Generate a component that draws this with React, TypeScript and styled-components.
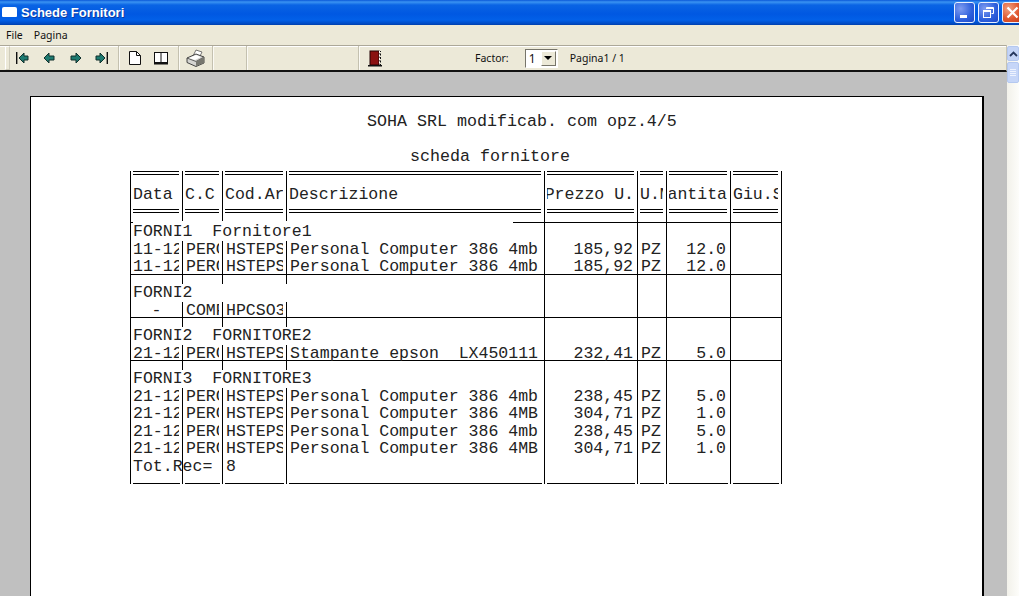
import React from 'react';
import styled, { createGlobalStyle } from 'styled-components';

const GlobalStyle = createGlobalStyle`
  html, body {
    margin: 0;
    height: 100%;
    overflow: hidden;
    background: #fff;
  }
`;

const Window = styled.div`
  display: flex;
  flex-direction: column;
  width: 1019px;
  height: 596px;
  overflow: hidden;
  font-family: 'Noto Sans', 'Liberation Sans', sans-serif;
  font-size: 11px;
  color: #111;
`;

const TitleBar = styled.header`
  display: flex;
  align-items: center;
  flex: 0 0 25px;
  padding: 0 0 1px 2px;
  box-sizing: border-box;
  background: linear-gradient(180deg, #0a58d8 0, #3a93f2 2px, #0a64e4 5px, #0058e2 14px, #0260e8 20px, #0048c0 24px, #003ea8 25px);
`;

const AppIcon = styled.span`
  width: 15px;
  height: 10px;
  margin: 0 4px 0 0;
  background: #fff;
  border-radius: 2px 2px 1px 1px;
`;

const TitleText = styled.span`
  flex: 1;
  font-family: 'Liberation Sans', Arial, sans-serif;
  font-size: 13px;
  font-weight: bold;
  color: #fff;
  text-shadow: 1px 1px 0 #0a3aa0;
`;

const CaptionButton = styled.span<{ $close?: boolean }>`
  display: flex;
  align-items: center;
  justify-content: center;
  width: 21px;
  height: 21px;
  margin-left: 3px;
  box-sizing: border-box;
  border: 1px solid #e8f0ff;
  border-radius: 3px;
  background: ${(p) =>
    p.$close
      ? 'radial-gradient(circle at 30% 30%, #f0a080, #e0562e 55%, #c43a16)'
      : 'radial-gradient(circle at 30% 30%, #7f9cf0, #2d5fdc 60%, #1e48c8)'};
  &:last-child {
    margin-right: -4px;
  }
`;

const MenuBar = styled.nav`
  display: flex;
  align-items: center;
  gap: 11px;
  flex: 0 0 20px;
  padding: 0 0 0 6px;
  background: #ece9d8;
`;

const MenuItem = styled.span`
  font-size: 10.5px;
`;

const Workspace = styled.div`
  display: flex;
  flex: 1;
  min-height: 0;
`;

const MainColumn = styled.div`
  display: flex;
  flex-direction: column;
  flex: 0 0 1007px;
  min-width: 0;
`;

const ToolBar = styled.div`
  display: flex;
  align-items: stretch;
  flex: 0 0 27px;
  box-sizing: border-box;
  background: #ece9d8;
  border-top: 1px solid #aca899;
  border-bottom: 2px solid #111;
  box-shadow: inset 0 1px 0 #fff;
  border-right: 1px solid #c8c5b4;
`;

const ToolGroup = styled.div<{ $w: number; $pad?: number }>`
  display: flex;
  align-items: center;
  flex: 0 0 ${(p) => p.$w}px;
  padding-left: ${(p) => p.$pad ?? 0}px;
  box-sizing: border-box;
  border-right: 1px solid #c4c1b0;
  box-shadow: 1px 0 0 #fbfaf4;
`;

const StatusGroup = styled.div`
  display: flex;
  align-items: center;
  flex: 1;
  padding-left: 9px;
`;

const Gripper = styled.span`
  width: 3px;
  height: 22px;
  margin-left: 5px;
  border: 1px solid #cfccbb;
  border-left-color: #fff;
  border-top-color: #fff;
`;

const ToolButton = styled.span<{ $w: number }>`
  display: flex;
  align-items: center;
  justify-content: center;
  flex: 0 0 ${(p) => p.$w}px;
`;

const ToolLabel = styled.span<{ $left: number }>`
  margin-left: ${(p) => p.$left}px;
  font-size: 10.5px;
  white-space: nowrap;
`;

const Combo = styled.span`
  display: flex;
  align-items: center;
  justify-content: space-between;
  width: 33px;
  height: 19px;
  margin-left: 16px;
  padding: 1px;
  box-sizing: border-box;
  background: #fff;
  border: 1px solid;
  border-color: #77756a #fff #fff #77756a;
  font-size: 12px;
`;

const ComboValue = styled.span`
  padding-left: 2px;
`;

const ComboArrow = styled.span`
  display: flex;
  align-items: center;
  justify-content: center;
  width: 15px;
  height: 15px;
  background: #ece9d8;
  border: 1px solid;
  box-sizing: border-box;
  border-color: #fff #77756a #77756a #fff;
  &::after {
    content: '';
    border: 4px solid transparent;
    border-top: 4px solid #000;
    border-bottom: 0;
  }
`;

const Canvas = styled.main`
  flex: 1;
  min-height: 0;
  overflow: hidden;
  padding: 24px 0 0 30px;
  background: #c0c0c0;
`;

const Sheet = styled.section`
  width: 952px;
  height: 560px;
  box-sizing: border-box;
  padding: 16px 0 0 0;
  background: #fff;
  border-top: 1px solid #000;
  border-left: 1px solid #000;
  box-shadow: 2px 0 0 #000;
  color: #222;
`;

const ReportLine = styled.div<{ $indent: number; $gap?: number }>`
  margin: ${(p) => p.$gap ?? 0}px 0 0 ${(p) => p.$indent}px;
  font-family: 'Liberation Mono', 'Courier New', monospace;
  font-size: 16.67px;
  line-height: 18px;
  white-space: pre;
`;

const columns = [52, 40, 64, 258, 93, 29, 64, 51];

const Table = styled.div`
  width: 652px;
  margin: 5px 0 0 99px;
  font-family: 'Liberation Mono', 'Courier New', monospace;
  font-size: 16.55px;
  line-height: 17.5px;
`;

const Row = styled.div<{ $h?: number }>`
  display: grid;
  grid-template-columns: ${columns.map((c) => `${c}px`).join(' ')};
  height: ${(p) => (p.$h ? `${p.$h}px` : '17.5px')};
  border-right: 1px solid #000;
`;

const Group = styled.div<{ $h?: number }>`
  height: ${(p) => (p.$h ? `${p.$h}px` : 'auto')};
  border-top: 1px solid #000;
  box-sizing: border-box;
`;

// the transparent right border keeps clipped text short of the next rule, as in the report
const Cell = styled.div<{ $align?: string; $span?: number; $open?: boolean }>`
  grid-column: span ${(p) => p.$span ?? 1};
  min-width: 0;
  padding: 0 ${(p) => (p.$align === 'right' ? '1px' : '0')} 0 ${(p) => (p.$align === 'right' ? '0' : '3px')};
  border-left: 1px solid #000;
  border-right: 3px solid transparent;
  text-align: ${(p) => p.$align ?? 'left'};
  white-space: pre;
  overflow: ${(p) => (p.$open ? 'visible' : 'hidden')};
  &:first-child {
    padding-left: ${(p) => (p.$align === 'center' ? '3px' : '2px')};
  }
`;

const GroupTitle = styled.div<{ $lift?: boolean }>`
  position: relative;
  width: 380px;
  height: 18px;
  margin-top: ${(p) => (p.$lift ? '-2px' : '0')};
  padding-top: ${(p) => (p.$lift ? '2px' : '0')};
  background: #fff;
`;

const HeadCell = styled.div`
  min-width: 0;
  padding: 0 3px 9px 2px;
  border-left: 1px solid #000;
`;

const HeadLabel = styled.div<{ $align?: string }>`
  display: flex;
  align-items: center;
  justify-content: ${(p) => (p.$align === 'right' ? 'flex-end' : 'flex-start')};
  box-sizing: border-box;
  height: 100%;
  padding-top: 5px;
  border-top: 4px double #000;
  border-bottom: 4px double #000;
  white-space: pre;
  overflow: hidden;
`;

const FootCell = styled.div`
  border-left: 1px solid #000;
  padding: 0 2px 0 2px;
`;

const FootRule = styled.div`
  height: 100%;
  box-sizing: border-box;
  border-bottom: 1px solid #000;
`;

const ScrollBar = styled.aside`
  display: flex;
  flex-direction: column;
  gap: 1px;
  flex: 1;
  padding-top: 1px;
  background: linear-gradient(90deg, #f2f1ea, #fdfdfa);
`;

const ScrollArrow = styled.span`
  display: flex;
  align-items: center;
  justify-content: center;
  height: 13px;
  border: 1px solid #b4c8f0;
  border-radius: 2px;
  background: #c4d4f6;
`;

const ScrollThumb = styled.span`
  display: flex;
  flex-direction: column;
  justify-content: center;
  gap: 1px;
  height: 19px;
  padding: 0 2px;
  border: 1px solid #b4c8f0;
  border-radius: 2px;
  background: #c6d6f8;
`;

const ThumbLine = styled.span`
  height: 1px;
  background: #eef3fe;
`;

// toolbar drawings

function NavIcon({ dir, stop }: { dir: 'left' | 'right'; stop?: boolean }) {
  return (
    <svg width="16" height="14" viewBox="0 0 16 14">
      <g transform={dir === 'right' ? 'translate(16 0) scale(-1 1)' : undefined}>
        {stop && <rect x="2" y="1" width="1.4" height="12" fill="#111" />}
        <path
          d={stop ? 'M5 7l5-5v3h4v4h-4v3z' : 'M3 7l5-5v3h5v4H8v3z'}
          fill="#1d7a70"
          stroke="#10302c"
          strokeWidth="1"
        />
      </g>
    </svg>
  );
}

function PageIcon() {
  return (
    <svg width="14" height="16" viewBox="0 0 14 16">
      <path d="M1.5 1.5h7l4 4v9h-11z" fill="#fff" stroke="#111" />
      <path d="M8.5 1.5v4h4" fill="none" stroke="#111" />
    </svg>
  );
}

function BookIcon() {
  return (
    <svg width="16" height="15" viewBox="0 0 16 15">
      <rect x="1.5" y="1.5" width="13" height="10" fill="#fff" stroke="#111" />
      <path d="M8 1.5v10" stroke="#111" />
      <path d="M1 12.5h14" stroke="#111" strokeWidth="2" />
    </svg>
  );
}

function PrinterIcon() {
  return (
    <svg width="19" height="18" viewBox="0 0 19 18">
      <path d="M10 1l6 2-3 6-6-2z" fill="#fff" stroke="#555" strokeWidth="0.8" />
      <path d="M1 9l9-4 8 3v6l-8 3.500-9-4z" fill="#d4d4d0" stroke="#333" strokeWidth="0.9" />
      <path d="M1 9l9 3.500 8-4.500" fill="none" stroke="#444" strokeWidth="0.8" />
      <path d="M10 12.500v4.500l8-3V8z" fill="#77776f" />
      <path d="M3 9l7-3 5 2-6 3z" fill="#fff" />
    </svg>
  );
}

function DoorIcon() {
  return (
    <svg width="14" height="17" viewBox="0 0 14 17">
      <rect x="2" y="1" width="9" height="14" fill="#8a1010" stroke="#200" />
      <path d="M11.500 1v14" stroke="#fff" strokeDasharray="2 1.500" />
      <path d="M12.500 1v14" stroke="#111" strokeDasharray="2 1.500" strokeDashoffset="1" />
      <rect x="0" y="15" width="14" height="1.500" fill="#111" />
    </svg>
  );
}

function CaptionGlyph({ kind }: { kind: 'min' | 'max' | 'close' }) {
  if (kind === 'min') {
    return (
      <svg width="13" height="13" viewBox="0 0 13 13">
        <rect x="2" y="9" width="7" height="3" fill="#fff" />
      </svg>
    );
  }
  if (kind === 'max') {
    return (
      <svg width="13" height="13" viewBox="0 0 13 13" fill="none" stroke="#fff">
        <path d="M4.500 3V1.500h7v6H9.500" />
        <rect x="1.500" y="4.500" width="7" height="7" />
        <path d="M1.500 5.500h7M4.500 2.500h7" />
      </svg>
    );
  }
  return (
    <svg width="13" height="13" viewBox="0 0 13 13" stroke="#fff" strokeWidth="2.2">
      <path d="M1.500 1.500l10 10M11.500 1.500l-10 10" />
    </svg>
  );
}

const headers: { text: string; align?: string }[] = [
  { text: 'Data' },
  { text: 'C.C' },
  { text: 'Cod.Art' },
  { text: 'Descrizione' },
  { text: 'Prezzo U.', align: 'right' },
  { text: 'U.M.' },
  { text: 'Quantita', align: 'right' },
  { text: 'Giu.Sc' }
];

type Line = { date: string; cc: string; code: string; text: string; price: string; unit: string; qty: string };

const pc4mb = 'Personal Computer 386 4mb';
const pc4MB = 'Personal Computer 386 4MB';

const groups: { title: string; lines: Line[]; h?: number }[] = [
  {
    title: 'FORNI1  Fornitore1',
    h: 52,
    lines: [
      { date: '11-12-95', cc: 'PERCOM', code: 'HSTEPSON', text: pc4mb, price: '185,92', unit: 'PZ', qty: '12.0' },
      { date: '11-12-95', cc: 'PERCOM', code: 'HSTEPSON', text: pc4mb, price: '185,92', unit: 'PZ', qty: '12.0' }
    ]
  },
  {
    title: 'FORNI2',
    h: 43,
    lines: [{ date: '-', cc: 'COMPUTER', code: 'HPCSO386', text: '', price: '', unit: '', qty: '' }]
  },
  {
    title: 'FORNI2  FORNITORE2',
    h: 43,
    lines: [
      { date: '21-12-95', cc: 'PERCOM', code: 'HSTEPSON', text: 'Stampante epson  LX450111', price: '232,41', unit: 'PZ', qty: '5.0' }
    ]
  },
  {
    title: 'FORNI3  FORNITORE3',
    lines: [
      { date: '21-12-95', cc: 'PERCOM', code: 'HSTEPSON', text: pc4mb, price: '238,45', unit: 'PZ', qty: '5.0' },
      { date: '21-12-95', cc: 'PERCOM', code: 'HSTEPSON', text: pc4MB, price: '304,71', unit: 'PZ', qty: '1.0' },
      { date: '21-12-95', cc: 'PERCOM', code: 'HSTEPSON', text: pc4mb, price: '238,45', unit: 'PZ', qty: '5.0' },
      { date: '21-12-95', cc: 'PERCOM', code: 'HSTEPSON', text: pc4MB, price: '304,71', unit: 'PZ', qty: '1.0' }
    ]
  }
];

function BlankCells({ count }: { count: number }) {
  return (
    <>
      {Array.from({ length: count }, (_, i) => (
        <Cell key={i} />
      ))}
    </>
  );
}

function DataRow({ line }: { line: Line }) {
  return (
    <Row>
      <Cell $align={line.date === '-' ? 'center' : undefined}>{line.date}</Cell>
      <Cell>{line.cc}</Cell>
      <Cell>{line.code}</Cell>
      <Cell>{line.text}</Cell>
      <Cell $align="right">{line.price}</Cell>
      <Cell>{line.unit}</Cell>
      <Cell $align="right">{line.qty}</Cell>
      <Cell />
    </Row>
  );
}

export default function App() {
  return (
    <Window>
      <GlobalStyle />
      <TitleBar>
        <AppIcon />
        <TitleText>Schede Fornitori</TitleText>
        <CaptionButton>
          <CaptionGlyph kind="min" />
        </CaptionButton>
        <CaptionButton>
          <CaptionGlyph kind="max" />
        </CaptionButton>
        <CaptionButton $close>
          <CaptionGlyph kind="close" />
        </CaptionButton>
      </TitleBar>
      <MenuBar>
        <MenuItem>File</MenuItem>
        <MenuItem>Pagina</MenuItem>
      </MenuBar>
      <Workspace>
        <MainColumn>
          <ToolBar>
            <ToolGroup $w={119}>
              <Gripper />
              <ToolButton $w={24}>
                <NavIcon dir="left" stop />
              </ToolButton>
              <ToolButton $w={29}>
                <NavIcon dir="left" />
              </ToolButton>
              <ToolButton $w={25}>
                <NavIcon dir="right" />
              </ToolButton>
              <ToolButton $w={28}>
                <NavIcon dir="right" stop />
              </ToolButton>
            </ToolGroup>
            <ToolGroup $w={60} $pad={3}>
              <ToolButton $w={26}>
                <PageIcon />
              </ToolButton>
              <ToolButton $w={26}>
                <BookIcon />
              </ToolButton>
            </ToolGroup>
            <ToolGroup $w={34} $pad={7}>
              <PrinterIcon />
            </ToolGroup>
            <ToolGroup $w={34} />
            <ToolGroup $w={112} />
            <StatusGroup>
              <DoorIcon />
              <ToolLabel $left={93}>Factor:</ToolLabel>
              <Combo>
                <ComboValue>1</ComboValue>
                <ComboArrow />
              </Combo>
              <ToolLabel $left={12}>Pagina1 / 1</ToolLabel>
            </StatusGroup>
          </ToolBar>
          <Canvas>
            <Sheet>
              <ReportLine $indent={336}>SOHA SRL modificab. com opz.4/5</ReportLine>
              <ReportLine $indent={379} $gap={17}>scheda fornitore</ReportLine>
              <Table>
                <Row $h={51}>
                  {headers.map((h) => (
                    <HeadCell key={h.text}>
                      <HeadLabel $align={h.align}>{h.text}</HeadLabel>
                    </HeadCell>
                  ))}
                </Row>
                {groups.map((g, i) => (
                  <Group key={i} $h={g.h}>
                    {i > 0 && (
                      <Row $h={9}>
                        <BlankCells count={8} />
                      </Row>
                    )}
                    <Row>
                      <Cell $span={4} $open>
                        <GroupTitle $lift={i === 0}>{g.title}</GroupTitle>
                      </Cell>
                      <BlankCells count={4} />
                    </Row>
                    {g.lines.map((line, j) => (
                      <DataRow key={j} line={line} />
                    ))}
                  </Group>
                ))}
                <Row>
                  <Cell $open>Tot.Rec=</Cell>
                  <Cell />
                  <Cell>8</Cell>
                  <BlankCells count={5} />
                </Row>
                <Row $h={9}>
                  {columns.map((c) => (
                    <FootCell key={c}>
                      <FootRule />
                    </FootCell>
                  ))}
                </Row>
              </Table>
            </Sheet>
          </Canvas>
        </MainColumn>
        <ScrollBar>
          <ScrollArrow>
            <svg width="9" height="6" viewBox="0 0 9 6" fill="none" stroke="#26375c" strokeWidth="1.800">
              <path d="M1 5l3.500-3.500L8 5" />
            </svg>
          </ScrollArrow>
          <ScrollThumb>
            <ThumbLine />
            <ThumbLine />
            <ThumbLine />
            <ThumbLine />
          </ScrollThumb>
        </ScrollBar>
      </Workspace>
    </Window>
  );
}
